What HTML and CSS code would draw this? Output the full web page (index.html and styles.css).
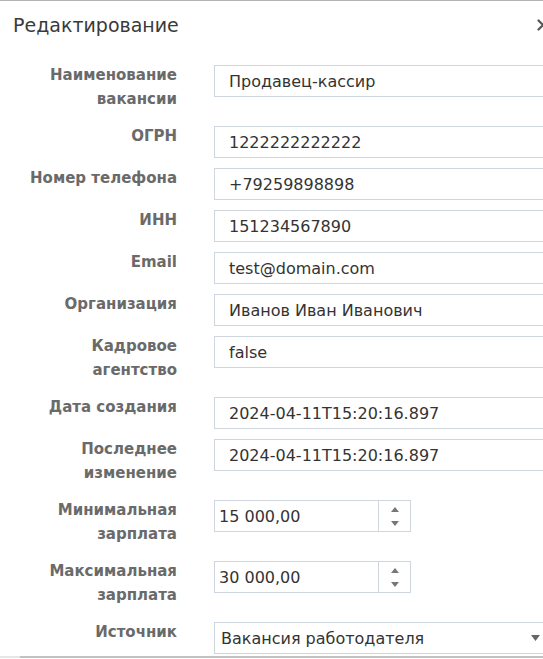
FILE: index.html
```html
<!DOCTYPE html>
<html lang="ru">
<head>
  <meta charset="UTF-8" />
  <meta name="viewport" content="width=device-width, initial-scale=1.0"/>
  <title>Редактирование</title>
  <link rel="stylesheet" href="styles.css">
</head>
<body>
  <div class="modal">
    <div class="modal-header">
      <span class="modal-title">Редактирование</span>
      <button class="modal-close" title="Закрыть">
        <svg width="12" height="12" viewBox="0 0 12 12"><path d="M1.5 1.5l9 9M10.5 1.5l-9 9" stroke="#555" stroke-width="2.2" stroke-linecap="round"/></svg>
      </button>
    </div>

    <form class="modal-body">
      <div class="form-row">
        <label class="form-label">Наименование вакансии</label>
        <input class="form-control" type="text" value="Продавец-кассир">
      </div>
      <div class="form-row">
        <label class="form-label">ОГРН</label>
        <input class="form-control" type="text" value="1222222222222">
      </div>
      <div class="form-row">
        <label class="form-label">Номер телефона</label>
        <input class="form-control" type="text" value="+79259898898">
      </div>
      <div class="form-row">
        <label class="form-label">ИНН</label>
        <input class="form-control" type="text" value="151234567890">
      </div>
      <div class="form-row">
        <label class="form-label">Email</label>
        <input class="form-control" type="text" value="test@domain.com">
      </div>
      <div class="form-row">
        <label class="form-label">Организация</label>
        <input class="form-control" type="text" value="Иванов Иван Иванович">
      </div>
      <div class="form-row">
        <label class="form-label">Кадровое агентство</label>
        <input class="form-control" type="text" value="false">
      </div>
      <div class="form-row">
        <label class="form-label">Дата создания</label>
        <input class="form-control" type="text" value="2024-04-11T15:20:16.897">
      </div>
      <div class="form-row">
        <label class="form-label">Последнее изменение</label>
        <input class="form-control" type="text" value="2024-04-11T15:20:16.897">
      </div>

      <!-- numeric fields with spinner -->
      <div class="form-row">
        <label class="form-label">Минимальная зарплата</label>
        <div class="numeric">
          <input class="numeric-input" type="text" value="15 000,00">
          <span class="spinner">
            <svg width="8" height="5" viewBox="0 0 8 5"><path d="M4 0L8 5H0z" fill="#777"/></svg>
            <svg width="8" height="5" viewBox="0 0 8 5"><path d="M0 0H8L4 5z" fill="#777"/></svg>
          </span>
        </div>
      </div>
      <div class="form-row">
        <label class="form-label">Максимальная зарплата</label>
        <div class="numeric">
          <input class="numeric-input" type="text" value="30 000,00">
          <span class="spinner">
            <svg width="8" height="5" viewBox="0 0 8 5"><path d="M4 0L8 5H0z" fill="#777"/></svg>
            <svg width="8" height="5" viewBox="0 0 8 5"><path d="M0 0H8L4 5z" fill="#777"/></svg>
          </span>
        </div>
      </div>

      <div class="form-row">
        <label class="form-label">Источник</label>
        <div class="dropdown">
          <span class="dropdown-value">Вакансия работодателя</span>
          <svg width="9" height="6" viewBox="0 0 9 6"><path d="M0 0H9L4.5 6z" fill="#666"/></svg>
        </div>
      </div>
    </form>

    <div class="scrollbar"><div class="scrollbar-thumb"></div></div>
  </div>
</body>
</html>
```

FILE: styles.css
```css
:root {
  --text: #333;
  --label: #6a6a6a;
  --border: #cfd6df;
  --white: #fff;
}
body {
  margin: 0;
  padding: 0;
  background: var(--white);
  font-family: 'DejaVu Sans', 'Open Sans', sans-serif;
  color: var(--text);
  overflow: hidden;
}
.modal {
  width: 565px;
  border-top: 1px solid #b3b3b3;
}
.modal-header {
  display: flex;
  justify-content: space-between;
  align-items: center;
  padding: 12px 16px 26px 13px;
}
.modal-title {
  font-size: 19px;
  line-height: 24px;
  color: #3a3a3a;
}
.modal-close {
  background: none;
  border: none;
  padding: 0;
  display: flex;
  cursor: pointer;
}
.modal-body {
  margin: 0;
  padding-right: 15px;
}
.form-row {
  display: flex;
  align-items: flex-start;
  margin-bottom: 8px;
}
.form-row:last-child {
  margin-bottom: 2px;
}
.form-label {
  flex: 0 0 214px;
  box-sizing: border-box;
  padding: 0 37px 5px 12px;
  text-align: right;
  font-size: 15px;
  font-weight: 700;
  line-height: 24px;
  color: var(--label);
}
.form-control {
  flex: 1;
  min-width: 0;
  box-sizing: border-box;
  height: 32px;
  margin: 2px 0 0 0;
  padding: 0 14px;
  border: 1px solid var(--border);
  border-radius: 0;
  font-family: inherit;
  font-size: 16px;
  color: var(--text);
  background: var(--white);
  outline: none;
}
/* numeric input */
.numeric {
  display: flex;
  width: 197px;
  height: 32px;
  box-sizing: border-box;
  margin-top: 2px;
  border: 1px solid var(--border);
}
.numeric-input {
  flex: 1;
  min-width: 0;
  border: none;
  padding: 0 4px;
  font-family: inherit;
  font-size: 16px;
  color: var(--text);
  outline: none;
}
.spinner {
  flex: 0 0 31px;
  display: flex;
  flex-direction: column;
  align-items: center;
  justify-content: center;
  gap: 9px;
  border-left: 1px solid var(--border);
}
/* select */
.dropdown {
  flex: 1;
  display: flex;
  align-items: center;
  justify-content: space-between;
  height: 32px;
  box-sizing: border-box;
  margin-top: 2px;
  padding: 0 9px 0 6px;
  border: 1px solid var(--border);
  font-size: 16px;
  color: var(--text);
}
.scrollbar {
  height: 2px;
  background: #e6e6e6;
}
.scrollbar-thumb {
  height: 2px;
  margin-left: 20px;
  background: #c2c2c2;
}
```
